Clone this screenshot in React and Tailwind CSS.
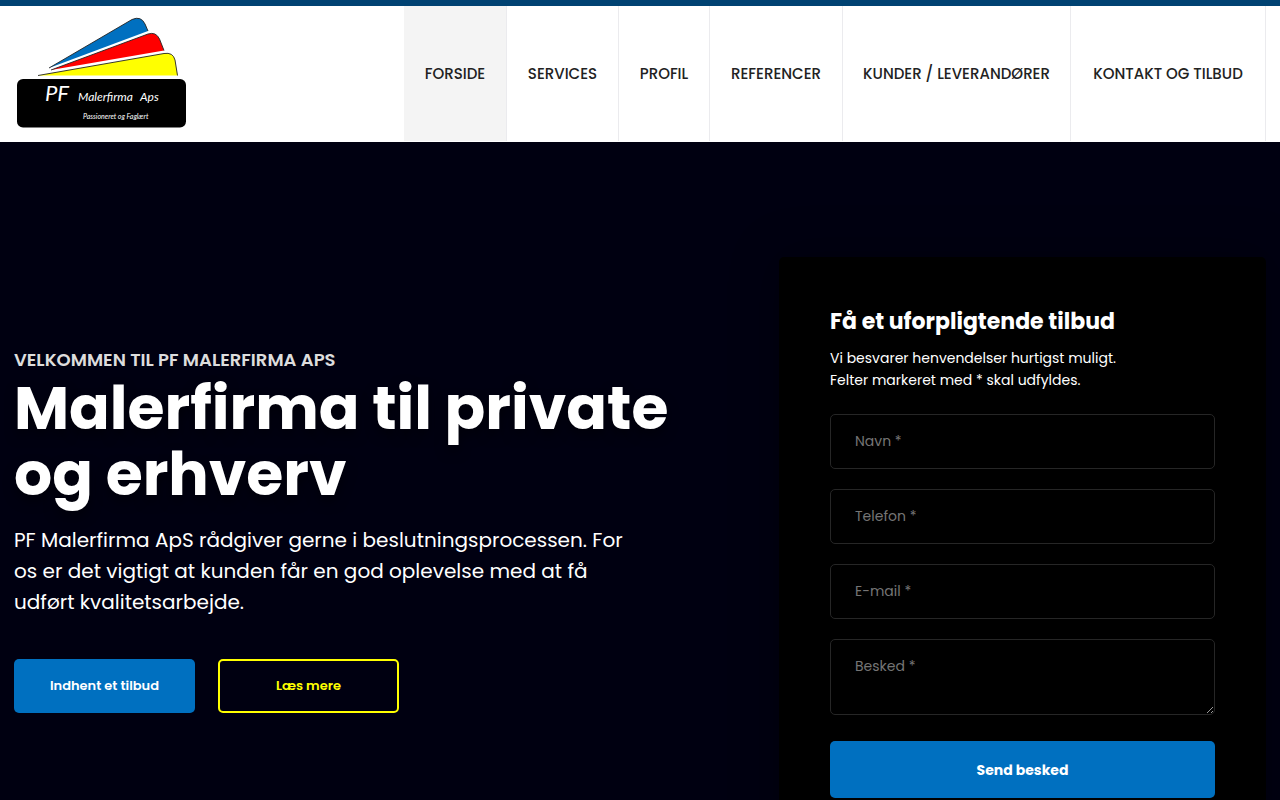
import { useState } from 'react';

const NAV = ['Forside', 'Services', 'Profil', 'Referencer', 'Kunder / Leverandører', 'Kontakt og tilbud'];

const FIELDS = [
  { id: 'navn', label: 'Navn *', type: 'text' },
  { id: 'telefon', label: 'Telefon *', type: 'tel' },
  { id: 'email', label: 'E-mail *', type: 'email' },
];

export default function App() {
  return (
    <div className="min-h-screen bg-[#000011] font-['Poppins','Inter',sans-serif] text-white">
      <Header />
      <main className="flex items-start justify-between px-[14px] pt-[115px] pb-24">
        <Intro />
        <QuoteForm />
      </main>
    </div>
  );
}

function Header() {
  return (
    <header className="flex justify-between border-t-[6px] border-[#004272] bg-white pr-[14px] pl-4">
      <a href="#forside" className="pt-[10px]">
        <Logo />
      </a>
      <nav className="mb-px grid h-[135px] w-[862px] grid-cols-[103fr_112fr_91fr_133fr_228fr_195fr]">
        {NAV.map((item, i) => (
          <a
            key={item}
            href="#"
            className={`flex items-center justify-center whitespace-nowrap border-r border-[#ebebee] pt-0.5 text-[15px] font-medium uppercase text-[#222222] ${i === 0 ? 'bg-[#f4f4f4]' : ''}`}
          >
            {item}
          </a>
        ))}
      </nav>
    </header>
  );
}

function Logo() {
  return (
    <svg width="172" height="114" viewBox="16 16 172 114" role="img" aria-label="PF Malerfirma Aps">
      <g strokeLinejoin="round">
        <path d="M49 68 L132 19.5 Q141 15.5 145 24 L148 31 Z" fill="#0070c0" />
        <path d="M51 70 L148 34 Q156 31.5 159.5 39 L164 50.5 Z" fill="#f00" />
        <path d="M38 75.5 L164 53.5 Q173 52 175 60 L177.5 75.5 Z" fill="#ff0" />
      </g>
      <g stroke="#222" strokeWidth="0.9" fill="none">
        <path d="M49 68 L132 19.5 Q141 15.5 145 24 L148 31" />
        <path d="M51 70 L148 34 Q156 31.5 159.5 39 L164 50.5" />
        <path d="M38 75.5 L164 53.5 Q173 52 175 60 L177.5 75.5" />
      </g>
      <rect x="17" y="79" width="169" height="48.5" rx="6" fill="#000" />
      <g fill="#fff" fontFamily="'Segoe Print', Lato, sans-serif" fontStyle="italic">
        <text x="45" y="101" fontSize="22">PF</text>
        <text x="78" y="101" fontSize="12">Malerfirma</text>
        <text x="140" y="101" fontSize="12">Aps</text>
        <text x="83" y="119" fontSize="7">Passioneret og Faglært</text>
      </g>
    </svg>
  );
}

function Intro() {
  return (
    <section className="mt-[92px] w-[680px]">
      <p className="text-lg leading-[22px] font-semibold text-[#dddddd] uppercase">Velkommen til PF Malerfirma ApS</p>
      <h1 className="mt-1 text-[60px] leading-[66px] font-bold [text-shadow:0_6px_12px_rgba(0,0,0,0.5)]">
        Malerfirma til private <br />
        og erhverv
      </h1>
      <p className="mt-[18px] text-xl leading-[31px]">
        PF Malerfirma ApS rådgiver gerne i beslutningsprocessen. For <br />
        os er det vigtigt at kunden får en god oplevelse med at få <br />
        udført kvalitetsarbejde.
      </p>
      <div className="mt-[41px] flex gap-[23px] text-[13px] font-semibold">
        <button className="h-[54px] w-[181px] rounded-[5px] bg-[#0070c0]">Indhent et tilbud</button>
        <button className="h-[54px] w-[181px] rounded-[5px] border-2 border-[#ffff00] text-[#ffff00]">Læs mere</button>
      </div>
    </section>
  );
}

function QuoteForm() {
  const [values, setValues] = useState({ navn: '', telefon: '', email: '', besked: '' });

  const change = (e) => setValues({ ...values, [e.target.name]: e.target.value });

  return (
    <form
      onSubmit={(e) => e.preventDefault()}
      className="w-[487px] rounded-[5px] bg-black px-[51px] py-[51px] text-sm shadow-[0_0_50px_rgba(0,0,0,0.3)]"
    >
      <h2 className="text-[22px] leading-7 font-bold">Få et uforpligtende tilbud</h2>
      <p className="mt-[11px] leading-[22px]">
        Vi besvarer henvendelser hurtigst muligt. <br />
        Felter markeret med * skal udfyldes.
      </p>
      <div className="mt-[23px] flex flex-col gap-5">
        {FIELDS.map((f) => (
          <input
            key={f.id}
            name={f.id}
            type={f.type}
            aria-label={f.label}
            value={values[f.id]}
            onChange={change}
            placeholder={f.label}
            className="h-[55px] w-full rounded-[5px] border border-[#262626] px-6 placeholder:text-[#757575]"
          />
        ))}
        <textarea
          name="besked"
          rows={2}
          aria-label="Besked *"
          value={values.besked}
          onChange={change}
          placeholder="Besked *"
          className="w-full rounded-[5px] border border-[#262626] px-6 py-[15px] leading-[22px] placeholder:text-[#757575]"
        />
      </div>
      <button type="submit" className="mt-[26px] h-[57px] w-full rounded-[5px] bg-[#0070c0] font-bold">
        Send besked
      </button>
    </form>
  );
}
